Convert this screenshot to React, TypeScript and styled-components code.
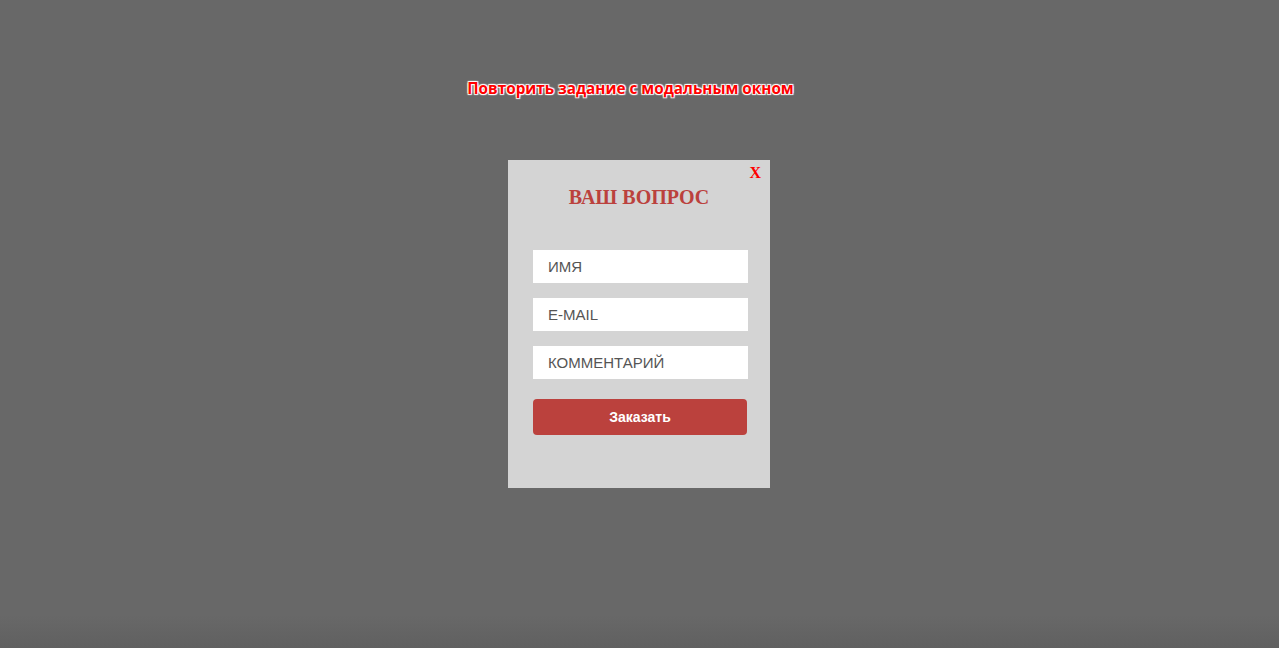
import React from "react";
import styled, { createGlobalStyle } from "styled-components";

const Global = createGlobalStyle`
  html, body { margin: 0; padding: 0; }
  body { background: #686868; font-family: "Liberation Sans", Arial, sans-serif; }
`;

const Page = styled.div`
  height: 648px;
  display: flex;
  flex-direction: column;
  align-items: center;
  background: linear-gradient(to bottom, #686868 0, #686868 615px, #606060 648px);
  overflow: hidden;
`;

const Heading = styled.h1`
  margin: 78px 18px 0 0;
  font-family: "Open Sans", sans-serif;
  font-weight: 700;
  font-size: 15.3px;
  line-height: 20px;
  color: #ff0000;
  text-shadow: 1px 1px 1px #fff, -1px -1px 1px #fff, 1px -1px 1px #fff, -1px 1px 1px #fff;
`;

const Modal = styled.div`
  position: relative;
  margin-top: 62px;
  margin-right: 1px;
  width: 262px;
  height: 328px;
  box-sizing: border-box;
  background: #d4d4d4;
  padding: 0 25px;
  display: flex;
  flex-direction: column;
`;

const Close = styled.span`
  position: absolute;
  top: 5px;
  right: 9px;
  font-family: "Liberation Serif", serif;
  font-weight: 700;
  font-size: 16px;
  line-height: 16px;
  color: #ff0000;
  cursor: pointer;
`;

const Title = styled.h2`
  margin: 25px 0 0;
  text-align: center;
  font-family: "Liberation Serif", serif;
  font-weight: 700;
  font-size: 20px;
  line-height: 24px;
  color: #bb413d;
`;

const Form = styled.form`
  margin-top: 41px;
  display: flex;
  flex-direction: column;
  gap: 15px;
`;

const Field = styled.input`
  width: 215px;
  height: 33px;
  box-sizing: border-box;
  border: none;
  outline: none;
  background: #fff;
  padding: 0 15px;
  font-family: "Liberation Sans", Arial, sans-serif;
  font-size: 15px;
  color: #555;
  &::placeholder { color: #555; opacity: 1; }
`;

const Submit = styled.button`
  margin-top: 5px;
  width: 214px;
  height: 36px;
  border: none;
  border-radius: 4px;
  background: #bb413d;
  color: #fff;
  font-family: "Liberation Sans", Arial, sans-serif;
  font-weight: 700;
  font-size: 14px;
  cursor: pointer;
`;

export default function App() {
  return (
    <>
      <Global />
      <Page>
        <Heading>Повторить задание с модальным окном</Heading>
        <Modal>
          <Close>X</Close>
          <Title>ВАШ ВОПРОС</Title>
          <Form onSubmit={(e) => e.preventDefault()}>
            <Field placeholder="ИМЯ" />
            <Field placeholder="E-MAIL" />
            <Field placeholder="КОММЕНТАРИЙ" />
            <Submit type="submit">Заказать</Submit>
          </Form>
        </Modal>
      </Page>
    </>
  );
}
